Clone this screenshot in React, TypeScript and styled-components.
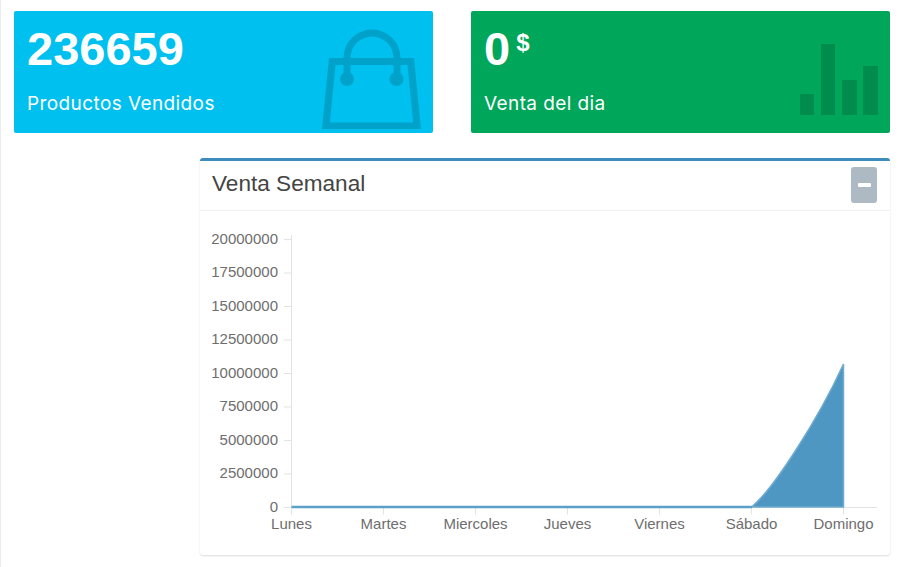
import React from 'react';
import styled, { createGlobalStyle } from 'styled-components';

const GlobalStyle = createGlobalStyle`
  html, body {
    margin: 0;
    padding: 0;
    background: #ffffff;
  }
`;

const Page = styled.div`
  box-sizing: border-box;
  width: 904px;
  height: 567px;
  overflow: hidden;
  padding: 11px 14px 0 14px;
  border-left: 1px solid #ececec;
`;

const StatRow = styled.div`
  display: grid;
  grid-template-columns: 419px 419px;
  column-gap: 38px;
  margin-left: -1px;
`;

const StatCard = styled.div<{ $bg: string }>`
  position: relative;
  box-sizing: border-box;
  height: 122px;
  padding: 9px 13px;
  border-radius: 2px;
  background: ${(p) => p.$bg};
  color: #ffffff;
`;

const StatNumber = styled.h3`
  margin: 0;
  font-family: 'Liberation Sans', Arial, sans-serif;
  font-weight: 700;
  font-size: 47px;
  line-height: 58px;

  sup {
    font-size: 24px;
    line-height: 0;
    vertical-align: 14px;
    margin-left: 6px;
  }
`;

const StatLabel = styled.p`
  margin: 13px 0 0 0;
  font-family: Inter, 'Open Sans', sans-serif;
  font-weight: 400;
  font-size: 19px;
  letter-spacing: 0.4px;
  line-height: 26px;
`;

const StatIcon = styled.svg`
  position: absolute;
  top: 0;
  right: 0;
  width: 120px;
  height: 122px;
  fill: #000000;
  opacity: 0.15;
`;

const Panel = styled.section`
  box-sizing: border-box;
  width: 690px;
  height: 397px;
  margin: 25px 0 0 185px;
  background: #ffffff;
  border-top: 3px solid #3c8dbc;
  border-radius: 3px;
  box-shadow: 0 1px 2px rgba(0, 0, 0, 0.14);
`;

const PanelHeader = styled.header`
  box-sizing: border-box;
  display: flex;
  align-items: center;
  justify-content: space-between;
  height: 50px;
  padding: 0 13px 0 12px;
  border-bottom: 1px solid #f1f1f1;
`;

const PanelTitle = styled.h3`
  margin: -4px 0 0 0;
  font-family: 'Liberation Sans', Arial, sans-serif;
  font-weight: 400;
  font-size: 22.6px;
  color: #444444;
`;

const CollapseButton = styled.button`
  display: flex;
  align-items: center;
  justify-content: center;
  width: 26px;
  height: 36px;
  padding: 0;
  margin-top: -1px;
  border: 0;
  border-radius: 3px;
  background: #adb9c3;
`;

const Minus = styled.span`
  width: 13px;
  height: 4px;
  border-radius: 1px;
  background: #ffffff;
`;

const ChartSvg = styled.svg`
  display: block;
  width: 690px;
  height: 344px;

  text {
    font-family: 'Liberation Sans', Arial, sans-serif;
    font-size: 15px;
    fill: #6e6e6e;
  }
`;

const yLabels = ['20000000', '17500000', '15000000', '12500000', '10000000', '7500000', '5000000', '2500000', '0'];
const xLabels = ['Lunes', 'Martes', 'Miercoles', 'Jueves', 'Viernes', 'Sábado', 'Domingo'];

const axisX = 91.5;
const axisY = 296.5;
const stepX = 92;
const stepY = 33.5;

const WeekChart: React.FC = () => (
  <ChartSvg viewBox="0 0 690 344">
    {yLabels.map((label, i) => {
      const y = 28.5 + i * stepY;
      return (
        <g key={label}>
          <line x1={84} x2={axisX} y1={y} y2={y} stroke="#e3e3e3" />
          <text x={78} y={y + 4} textAnchor="end">
            {label}
          </text>
        </g>
      );
    })}
    <line x1={axisX} x2={axisX} y1={24} y2={axisY + 7} stroke="#e3e3e3" />
    <line x1={axisX} x2={677} y1={axisY} y2={axisY} stroke="#e3e3e3" />
    {xLabels.map((label, i) => {
      const x = axisX + i * stepX;
      return (
        <g key={label}>
          <line x1={x} x2={x} y1={axisY} y2={axisY + 7} stroke="#e3e3e3" />
          <text x={x} y={axisY + 21} textAnchor="middle">
            {label}
          </text>
        </g>
      );
    })}
    <path
      d="M551.5 296 C572 280 618 209 643.5 153 L643.5 296 Z"
      fill="#4f97c3"
      stroke="#6fabd0"
      strokeWidth={1.5}
    />
    <line x1={axisX} x2={552} y1={296} y2={296} stroke="#5ba0c9" strokeWidth={2.5} />
  </ChartSvg>
);

const App: React.FC = () => {
  return (
    <Page>
      <GlobalStyle />
      <StatRow>
        <StatCard $bg="#00c0ef">
          <StatNumber>236659</StatNumber>
          <StatLabel>Productos Vendidos</StatLabel>
          <StatIcon viewBox="313 11 120 122">
            <path
              fillRule="evenodd"
              d="M329 58 H414 L421 129 H322 Z M335.5 65 L329.8 122.5 H413.2 L407.5 65 Z"
            />
            <path d="M343.5 76 V58 A28.5 28.5 0 0 1 400.5 58 V76 H393.5 V58 A21.5 21.5 0 0 0 350.5 58 V76 Z" />
            <circle cx={347} cy={79} r={7} />
            <circle cx={396.5} cy={79} r={7} />
          </StatIcon>
        </StatCard>
        <StatCard $bg="#00a65a">
          <StatNumber>
            0<sup>$</sup>
          </StatNumber>
          <StatLabel>Venta del dia</StatLabel>
          <StatIcon viewBox="770 11 120 122">
            <rect x={800} y={94} width={14} height={21} />
            <rect x={821} y={44} width={14} height={71} />
            <rect x={842} y={80} width={15} height={35} />
            <rect x={863} y={66} width={15} height={49} />
          </StatIcon>
        </StatCard>
      </StatRow>
      <Panel>
        <PanelHeader>
          <PanelTitle>Venta Semanal</PanelTitle>
          <CollapseButton aria-label="Minimizar">
            <Minus />
          </CollapseButton>
        </PanelHeader>
        <WeekChart />
      </Panel>
    </Page>
  );
};

export default App;
